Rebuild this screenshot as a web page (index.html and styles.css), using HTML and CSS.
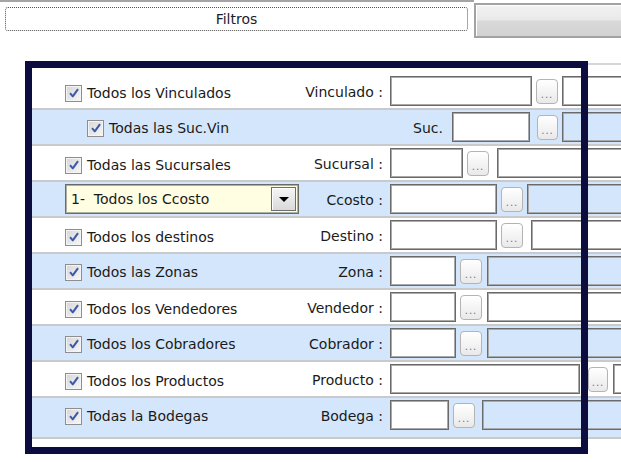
FILE: index.html
```html
<!DOCTYPE html>
<html lang="es">
<head>
    <meta charset="UTF-8">
    <title>Filtros</title>
    <link rel="stylesheet" href="styles.css">
</head>
<body>
<div class="topbar">
    <div class="filtros-btn"><div class="focus">Filtros</div></div>
    <div class="tab-btn"></div>
</div>

<div class="panel">
    <div class="row">
        <div class="left"><span class="chk"><svg viewBox="0 0 16 16"><path d="M3.5 8.2 L6.6 11.8 L12.6 3.6"/></svg></span>Todos los Vinculados</div>
        <div class="lbl">Vinculado :</div>
        <div class="fields">
            <div class="code code-vin"></div><div class="pick">...</div><div class="desc"></div>
        </div>
    </div>
    <div class="row blue">
        <div class="left sub"><span class="chk"><svg viewBox="0 0 16 16"><path d="M3.5 8.2 L6.6 11.8 L12.6 3.6"/></svg></span>Todas las Suc.Vin</div>
        <div class="lbl"></div>
        <div class="fields">
            <span class="inner-lbl">Suc.</span><div class="code code-suc"></div><div class="pick pick-wide">...</div><div class="desc"></div>
        </div>
    </div>
    <div class="row">
        <div class="left"><span class="chk"><svg viewBox="0 0 16 16"><path d="M3.5 8.2 L6.6 11.8 L12.6 3.6"/></svg></span>Todas las Sucursales</div>
        <div class="lbl">Sucursal :</div>
        <div class="fields">
            <div class="code code-sucursal"></div><div class="pick">...</div><div class="desc desc-far"></div>
        </div>
    </div>
    <div class="row blue">
        <div class="left">
            <div class="combo"><span class="combo-text">1-&nbsp; Todos los Ccosto</span><span class="drop"><span class="arrow"></span></span></div>
        </div>
        <div class="lbl">Ccosto :</div>
        <div class="fields">
            <div class="code code-md"></div><div class="pick">...</div><div class="desc"></div>
        </div>
    </div>
    <div class="row">
        <div class="left"><span class="chk"><svg viewBox="0 0 16 16"><path d="M3.5 8.2 L6.6 11.8 L12.6 3.6"/></svg></span>Todos los destinos</div>
        <div class="lbl">Destino :</div>
        <div class="fields">
            <div class="code code-md"></div><div class="pick">...</div><div class="desc desc-far"></div>
        </div>
    </div>
    <div class="row blue">
        <div class="left"><span class="chk"><svg viewBox="0 0 16 16"><path d="M3.5 8.2 L6.6 11.8 L12.6 3.6"/></svg></span>Todos las Zonas</div>
        <div class="lbl">Zona :</div>
        <div class="fields">
            <div class="code code-sm"></div><div class="pick">...</div><div class="desc desc-mid"></div>
        </div>
    </div>
    <div class="row">
        <div class="left"><span class="chk"><svg viewBox="0 0 16 16"><path d="M3.5 8.2 L6.6 11.8 L12.6 3.6"/></svg></span>Todos los Vendedores</div>
        <div class="lbl">Vendedor :</div>
        <div class="fields">
            <div class="code code-sm"></div><div class="pick">...</div><div class="desc desc-mid"></div>
        </div>
    </div>
    <div class="row blue">
        <div class="left"><span class="chk"><svg viewBox="0 0 16 16"><path d="M3.5 8.2 L6.6 11.8 L12.6 3.6"/></svg></span>Todos los Cobradores</div>
        <div class="lbl">Cobrador :</div>
        <div class="fields">
            <div class="code code-sm"></div><div class="pick">...</div><div class="desc desc-mid"></div>
        </div>
    </div>
    <div class="row">
        <div class="left"><span class="chk"><svg viewBox="0 0 16 16"><path d="M3.5 8.2 L6.6 11.8 L12.6 3.6"/></svg></span>Todos los Productos</div>
        <div class="lbl">Producto :</div>
        <div class="fields">
            <div class="code code-prod"></div><div class="pick pick-far">...</div><div class="desc desc-mid"></div>
        </div>
    </div>
    <div class="row blue last">
        <div class="left"><span class="chk"><svg viewBox="0 0 16 16"><path d="M3.5 8.2 L6.6 11.8 L12.6 3.6"/></svg></span>Todas la Bodegas</div>
        <div class="lbl">Bodega :</div>
        <div class="fields">
            <div class="code code-bod"></div><div class="pick">...</div><div class="desc desc-bod"></div>
        </div>
    </div>
</div>

<!-- marco resaltado encima del formulario -->
<div class="highlight"></div>
</body>
</html>
```

FILE: styles.css
```css
body{
    margin:0px;
    background-color:white;
    font-family:"DejaVu Sans", Verdana, sans-serif;
    font-size:14px;
    color:#1a1a1a;
    overflow:hidden;
    width:621px;
    height:462px;
    position:relative;
}
.topbar{
    display:flex;
    height:41px;
}
.filtros-btn{
    width:474px;
    border-top:2px solid #a4a4a4;
    padding:5px 6px 0px 5px;
    box-sizing:border-box;
}
.focus{
    height:22px;
    line-height:22px;
    border:1px dotted #505050;
    border-radius:3px;
    text-align:center;
    color:#1c1c2c;
}
.tab-btn{
    flex:1;
    margin-top:3px;
    height:35px;
    box-sizing:border-box;
    border:2px solid #a2a2a2;
    border-right:0px;
    box-shadow:inset 1px 1px 0px white;
    background:linear-gradient(#f2f2f2 0%, #e9e9e9 48%, #d9d9d9 52%, #d2d2d2 100%);
}

.panel{
    margin-top:22px;
    margin-left:26px;
    width:700px;
    border-top:2px solid #d6d6d6;
    padding-top:9px;
}
.row{
    display:flex;
    align-items:center;
    height:36px;
    box-sizing:border-box;
    border-bottom:2px solid #cacaca;
    background-color:white;
}
.row.blue{
    background-color:#d4e6fb;
}
.row.last{
    height:41px;
    padding-bottom:5px;
}
.left{
    width:274px;
    padding-left:39px;
    padding-top:4px;
    box-sizing:border-box;
    display:flex;
    align-items:center;
    white-space:nowrap;
}
.left.sub{
    padding-left:61px;
    padding-top:2px;
}
.blue .left{
    padding-top:2px;
}
.chk{
    width:17px;
    height:17px;
    box-sizing:border-box;
    border:1px solid #8e8e8e;
    background:linear-gradient(135deg, #d6d6d6, #f7f7f7);
    box-shadow:inset 0px 0px 0px 1px #f4f4f4;
    margin-right:5px;
    display:flex;
    align-items:center;
    justify-content:center;
}
.chk svg{
    width:14px;
    height:14px;
}
.chk path{
    fill:none;
    stroke:#3c58a8;
    stroke-width:2.3;
    stroke-linejoin:round;
}
.lbl{
    width:83px;
    text-align:right;
    white-space:nowrap;
    padding-top:1px;
}
.fields{
    flex:1;
    display:flex;
    align-items:center;
    margin-left:7px;
}
.inner-lbl{
    width:53px;
    text-align:right;
    margin-right:9px;
    padding-top:2px;
}
.code, .desc{
    height:30px;
    box-sizing:border-box;
    border:1px solid #6a6a6a;
    box-shadow:inset 0px 0px 0px 1px #a9a9a9;
}
.code{
    background-color:white;
}
.code-vin{ width:142px; }
.code-suc{ width:78px; }
.code-sucursal{ width:73px; }
.code-md{ width:107px; }
.code-sm{ width:66px; }
.code-prod{ width:190px; }
.code-bod{ width:59px; }

.pick{
    width:22px;
    height:25px;
    margin-left:4px;
    box-sizing:border-box;
    border:1px solid #b4b4b4;
    border-radius:4px;
    background:linear-gradient(#ffffff, #e9e9e9);
    color:#6576a6;
    font-size:10px;
    letter-spacing:1px;
    text-align:center;
    line-height:30px;
    overflow:hidden;
}
.pick-wide{ margin-left:7px; width:21px; }
.pick-far{ margin-left:8px; width:20px; }

.desc{
    flex:1;
    margin-left:4px;
    background-color:transparent;
}
.desc-far{ margin-left:8px; }
.desc-mid{ margin-left:5px; }
.desc-bod{ margin-left:7px; }

.combo{
    width:234px;
    height:30px;
    box-sizing:border-box;
    border:1px solid #6a6a6a;
    box-shadow:inset 0px 0px 0px 1px #b0b0a0;
    background-color:#fffde2;
    display:flex;
    align-items:center;
    padding-left:5px;
    padding-right:2px;
    margin-top:-2px;
}
.combo-text{
    flex:1;
    white-space:nowrap;
}
.drop{
    width:25px;
    height:24px;
    box-sizing:border-box;
    border:1px solid #6e6e6e;
    box-shadow:inset 1px 1px 0px white;
    background:linear-gradient(#f6f6f6, #d9d9d9);
    display:flex;
    align-items:center;
    justify-content:center;
}
.arrow{
    width:0px;
    height:0px;
    border-left:5px solid transparent;
    border-right:5px solid transparent;
    border-top:5px solid black;
    margin-top:1px;
}

.highlight{
    position:absolute;
    left:25px;
    top:61px;
    width:563px;
    height:393px;
    box-sizing:border-box;
    border:7px solid #0c0c3e;
}
```
